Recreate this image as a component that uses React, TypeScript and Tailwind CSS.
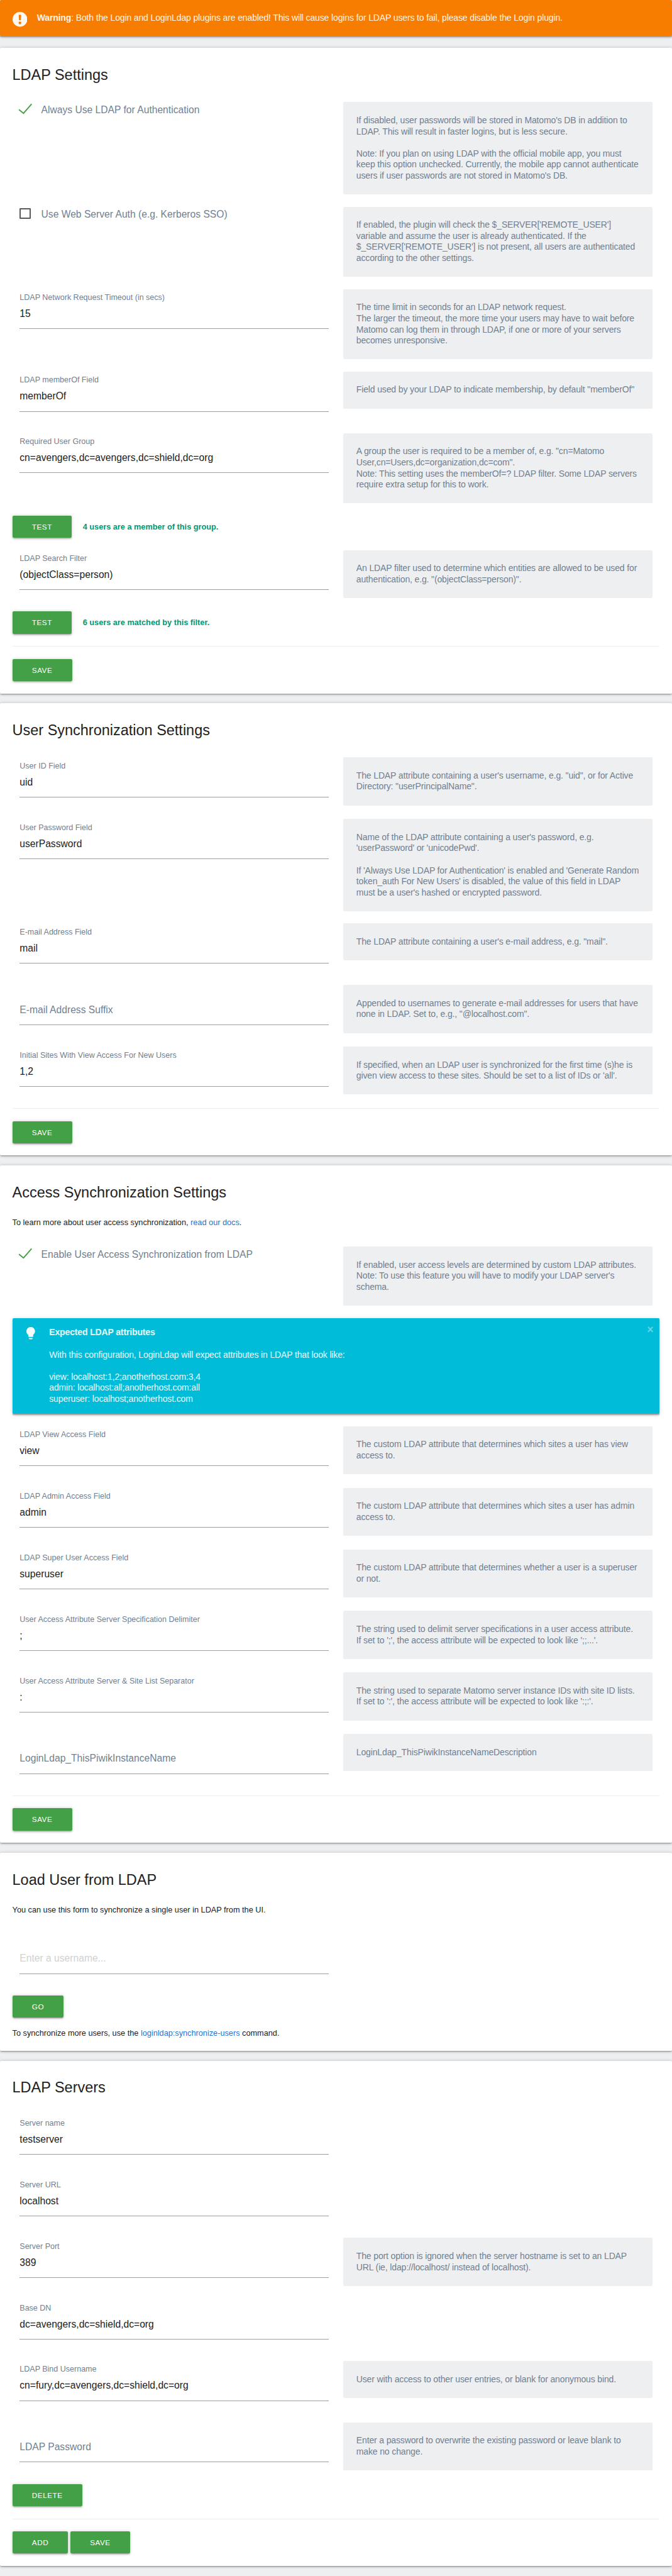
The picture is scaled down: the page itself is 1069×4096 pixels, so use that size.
import React from "react";

type Children = { children?: React.ReactNode };

function Card({ title, intro, last, children }: Children & { title: string; intro?: React.ReactNode; last?: boolean }) {
  return (
    <section
      className={
        "rounded-[2px] bg-white px-5 pb-5 shadow-[0_2px_2px_0_rgba(0,0,0,.14),0_3px_1px_-2px_rgba(0,0,0,.12),0_1px_5px_0_rgba(0,0,0,.2)] " +
        (last ? "" : "mb-4")
      }
    >
      <h2 className={"pt-[29.5px] text-[24px] leading-[30px] text-[#212121] " + (intro ? "h-[82px]" : "h-[88px]")}>{title}</h2>
      {intro && <p className="h-[50px] pt-[0.5px] text-[13px] leading-[20px] text-[#212121]">{intro}</p>}
      {children}
    </section>
  );
}

function Row({ help, children }: Children & { help?: string[] }) {
  return (
    <div className="grid min-h-[100px] grid-cols-2 items-start">
      <div className="px-3">{children}</div>
      {help && (
        <div className="px-3 pb-5">
          <div className="rounded-[2px] bg-[#eeeff1] p-[21px] text-[14.31px] leading-[18px] tracking-[-0.14px] whitespace-nowrap text-[#708090]">
            {help.map((line, i) => (
              <div key={i} className="h-[18px]">
                {line}
              </div>
            ))}
          </div>
        </div>
      )}
    </div>
  );
}

function Field({ label, value, placeholder, help }: { label?: string; value?: string; placeholder?: string; help?: string[] }) {
  return (
    <Row help={help}>
      <div className="h-[65px] border-b border-[#9e9e9e] pt-[5px]">
        <div className="h-[25px] pt-[0.5px] text-[12.8px] leading-[18px] text-[#708090]">{value ? label : ""}</div>
        {value ? (
          <div className="text-[16px] leading-[20px] text-[#212121]">{value}</div>
        ) : (
          <div className={"text-[16px] leading-[20px] " + (placeholder ? "text-[#d1d1d1]" : "text-[#708090]")}>
            {placeholder ?? label}
          </div>
        )}
      </div>
    </Row>
  );
}

function Check({ label, checked, help }: { label: string; checked?: boolean; help: string[] }) {
  return (
    <Row help={help}>
      <div className="flex h-6 items-start">
        {checked ? (
          <svg className="-ml-1 mt-px h-6 w-[39px]" viewBox="0 0 39 24" fill="none" stroke="#43a047" strokeWidth="1.9">
            <path d="M3.2 11.6 L10.6 17.6 L23.8 2.4" />
          </svg>
        ) : (
          <span className="mt-[2px] mr-[17px] h-[18px] w-[18px] rounded-[1px] border-[2.1px] border-[#5a5a5a]" />
        )}
        <span className="pt-[2.5px] text-[16px] leading-[20px] text-[#708090]">{label}</span>
      </div>
    </Row>
  );
}

function Button({ children }: Children) {
  return (
    <button className="h-9 rounded-[2px] bg-[#43a047] px-8 text-[12px] leading-[36px] tracking-[0.5px] text-white uppercase shadow-[0_2px_2px_0_rgba(0,0,0,.14),0_3px_1px_-2px_rgba(0,0,0,.12),0_1px_5px_0_rgba(0,0,0,.2)]">
      {children}
    </button>
  );
}

function TestRow({ message }: { message: string }) {
  return (
    <div className="mb-5 flex h-9 items-center gap-[18px]">
      <Button>Test</Button>
      <span className="text-[13px] leading-[36px] font-bold text-[#009874]">{message}</span>
    </div>
  );
}

function Actions({ children }: Children) {
  return <div className="flex gap-[3.6px] border-t border-[#eeeeee] pt-5">{children}</div>;
}

function Link({ children }: Children) {
  return <a className="text-[#1976d2]">{children}</a>;
}

const NOTICE_SHADOW = "shadow-[0_3px_3px_0_rgba(0,0,0,.14),0_1px_7px_0_rgba(0,0,0,.12),0_3px_1px_-1px_rgba(0,0,0,.2)]";

export default function App() {
  return (
    <div className="min-h-[4186px] overflow-hidden bg-[#eeeff1] font-['Liberation_Sans',Arial,sans-serif] [zoom:0.9785]">
      <div className={"mb-5 flex h-[58px] items-start rounded-[2px] bg-[#f77d00] px-5 text-white/90 " + NOTICE_SHADOW}>
        <svg className="mt-[19.6px] mr-4 h-6 w-6 shrink-0" viewBox="0 0 24 24">
          <circle cx="12" cy="12" r="12" fill="#fff" fillOpacity=".95" />
          <path d="M10 4.6h4l-.5 9h-3z" fill="#f77d00" />
          <circle cx="12" cy="17.9" r="2.2" fill="#f77d00" />
        </svg>
        <p className="pt-5 text-[14.31px] leading-[18px] tracking-[-0.14px]">
          <strong>Warning</strong>: Both the Login and LoginLdap plugins are enabled! This will cause logins for LDAP users to fail,
          please disable the Login plugin.
        </p>
      </div>

      <Card title="LDAP Settings">
        <Check
          checked
          label="Always Use LDAP for Authentication"
          help={[
            "If disabled, user passwords will be stored in Matomo's DB in addition to",
            "LDAP. This will result in faster logins, but is less secure.",
            "",
            "Note: If you plan on using LDAP with the official mobile app, you must",
            "keep this option unchecked. Currently, the mobile app cannot authenticate",
            "users if user passwords are not stored in Matomo's DB.",
          ]}
        />
        <Check
          label="Use Web Server Auth (e.g. Kerberos SSO)"
          help={[
            "If enabled, the plugin will check the $_SERVER['REMOTE_USER']",
            "variable and assume the user is already authenticated. If the",
            "$_SERVER['REMOTE_USER'] is not present, all users are authenticated",
            "according to the other settings.",
          ]}
        />
        <Field
          label="LDAP Network Request Timeout (in secs)"
          value="15"
          help={[
            "The time limit in seconds for an LDAP network request.",
            "The larger the timeout, the more time your users may have to wait before",
            "Matomo can log them in through LDAP, if one or more of your servers",
            "becomes unresponsive.",
          ]}
        />
        <Field
          label="LDAP memberOf Field"
          value="memberOf"
          help={['Field used by your LDAP to indicate membership, by default "memberOf"']}
        />
        <Field
          label="Required User Group"
          value="cn=avengers,dc=avengers,dc=shield,dc=org"
          help={[
            'A group the user is required to be a member of, e.g. "cn=Matomo',
            'User,cn=Users,dc=organization,dc=com".',
            "Note: This setting uses the memberOf=? LDAP filter. Some LDAP servers",
            "require extra setup for this to work.",
          ]}
        />
        <TestRow message="4 users are a member of this group." />
        <Field
          label="LDAP Search Filter"
          value="(objectClass=person)"
          help={[
            "An LDAP filter used to determine which entities are allowed to be used for",
            'authentication, e.g. "(objectClass=person)".',
          ]}
        />
        <TestRow message="6 users are matched by this filter." />
        <Actions>
          <Button>Save</Button>
        </Actions>
      </Card>

      <Card title="User Synchronization Settings">
        <Field
          label="User ID Field"
          value="uid"
          help={[
            'The LDAP attribute containing a user\'s username, e.g. "uid", or for Active',
            'Directory: "userPrincipalName".',
          ]}
        />
        <Field
          label="User Password Field"
          value="userPassword"
          help={[
            "Name of the LDAP attribute containing a user's password, e.g.",
            "'userPassword' or 'unicodePwd'.",
            "",
            "If 'Always Use LDAP for Authentication' is enabled and 'Generate Random",
            "token_auth For New Users' is disabled, the value of this field in LDAP",
            "must be a user's hashed or encrypted password.",
          ]}
        />
        <Field
          label="E-mail Address Field"
          value="mail"
          help={['The LDAP attribute containing a user\'s e-mail address, e.g. "mail".']}
        />
        <Field
          label="E-mail Address Suffix"
          help={[
            "Appended to usernames to generate e-mail addresses for users that have",
            'none in LDAP. Set to, e.g., "@localhost.com".',
          ]}
        />
        <Field
          label="Initial Sites With View Access For New Users"
          value="1,2"
          help={[
            "If specified, when an LDAP user is synchronized for the first time (s)he is",
            "given view access to these sites. Should be set to a list of IDs or 'all'.",
          ]}
        />
        <Actions>
          <Button>Save</Button>
        </Actions>
      </Card>

      <Card
        title="Access Synchronization Settings"
        intro={
          <>
            To learn more about user access synchronization, <Link>read our docs</Link>.
          </>
        }
      >
        <Check
          checked
          label="Enable User Access Synchronization from LDAP"
          help={[
            "If enabled, user access levels are determined by custom LDAP attributes.",
            "Note: To use this feature you will have to modify your LDAP server's",
            "schema.",
          ]}
        />
        <div className={"mb-5 flex h-[156px] items-start rounded-[2px] bg-[#00bcd8] pt-[15px] pl-[23px] text-white/90 " + NOTICE_SHADOW}>
          <svg className="mr-[23px] h-5 w-[14px] shrink-0" viewBox="0 0 14 20" fill="#fff" fillOpacity=".95">
            <path d="M7 0a7 7 0 0 0-4 12.74V15a1 1 0 0 0 1 1h6a1 1 0 0 0 1-1v-2.26A7 7 0 0 0 7 0z" />
            <path d="M4 18h6a1.6 1.6 0 0 1-1.4 2H5.4A1.6 1.6 0 0 1 4 18z" />
          </svg>
          <div className="grow text-[14.31px] leading-[18px] tracking-[-0.14px]">
            <strong>Expected LDAP attributes</strong>
            <p className="pt-[18px] pb-[18px]">With this configuration, LoginLdap will expect attributes in LDAP that look like:</p>
            <p>view: localhost:1,2;anotherhost.com:3,4</p>
            <p>admin: localhost:all;anotherhost.com:all</p>
            <p>superuser: localhost;anotherhost.com</p>
          </div>
          <span className="-mt-[5px] mr-[10px] text-[18px] leading-[20px] font-bold text-white/40">×</span>
        </div>
        <Field
          label="LDAP View Access Field"
          value="view"
          help={["The custom LDAP attribute that determines which sites a user has view", "access to."]}
        />
        <Field
          label="LDAP Admin Access Field"
          value="admin"
          help={["The custom LDAP attribute that determines which sites a user has admin", "access to."]}
        />
        <Field
          label="LDAP Super User Access Field"
          value="superuser"
          help={["The custom LDAP attribute that determines whether a user is a superuser", "or not."]}
        />
        <Field
          label="User Access Attribute Server Specification Delimiter"
          value=";"
          help={[
            "The string used to delimit server specifications in a user access attribute.",
            "If set to ';', the access attribute will be expected to look like ';;...'.",
          ]}
        />
        <Field
          label="User Access Attribute Server & Site List Separator"
          value=":"
          help={[
            "The string used to separate Matomo server instance IDs with site ID lists.",
            "If set to ':', the access attribute will be expected to look like ':;:'.",
          ]}
        />
        <Field label="LoginLdap_ThisPiwikInstanceName" help={["LoginLdap_ThisPiwikInstanceNameDescription"]} />
        <Actions>
          <Button>Save</Button>
        </Actions>
      </Card>

      <Card title="Load User from LDAP" intro="You can use this form to synchronize a single user in LDAP from the UI.">
        <Field placeholder="Enter a username..." />
        <div className="flex">
          <Button>Go</Button>
        </div>
        <p className="h-[34px] pt-[15.5px] text-[13px] leading-[20px] text-[#212121]">
          To synchronize more users, use the <Link>loginldap:synchronize-users</Link> command.
        </p>
      </Card>

      <Card title="LDAP Servers" last>
        <Field label="Server name" value="testserver" />
        <Field label="Server URL" value="localhost" />
        <Field
          label="Server Port"
          value="389"
          help={[
            "The port option is ignored when the server hostname is set to an LDAP",
            "URL (ie, ldap://localhost/ instead of localhost).",
          ]}
        />
        <Field label="Base DN" value="dc=avengers,dc=shield,dc=org" />
        <Field
          label="LDAP Bind Username"
          value="cn=fury,dc=avengers,dc=shield,dc=org"
          help={["User with access to other user entries, or blank for anonymous bind."]}
        />
        <Field
          label="LDAP Password"
          help={["Enter a password to overwrite the existing password or leave blank to", "make no change."]}
        />
        <div className="mb-5 flex">
          <Button>Delete</Button>
        </div>
        <Actions>
          <Button>Add</Button>
          <Button>Save</Button>
        </Actions>
      </Card>
    </div>
  );
}
